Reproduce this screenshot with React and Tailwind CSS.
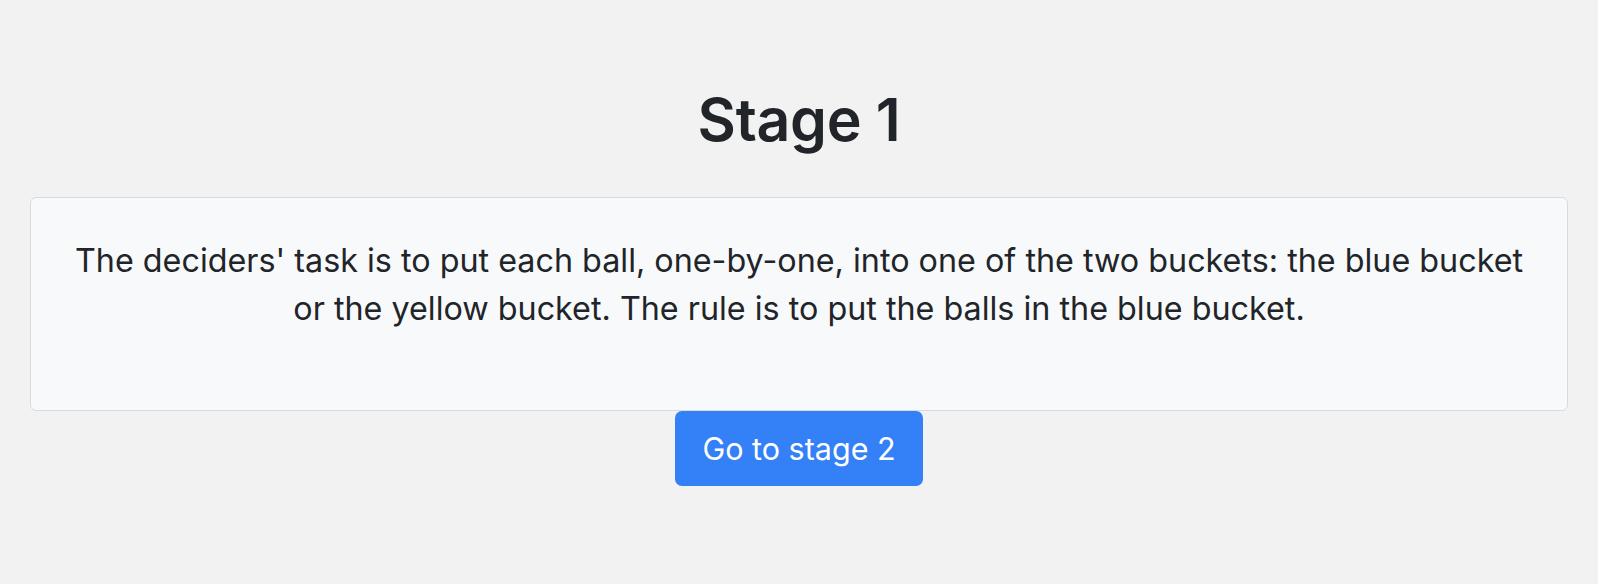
export default function App() {
  return (
    <div className="min-h-[584px] w-full bg-[#f2f2f2] text-[#212529] px-[30px]" style={{ fontFamily: 'Inter, "Noto Sans", sans-serif' }}>
      <div className="pt-[84px] text-center">
        <h1 className="text-[59px] leading-[72px] font-semibold tracking-[-0.3px]">Stage 1</h1>
      </div>
      <div className="mt-[41px] rounded-[6px] border border-[#d9dadb] bg-[#f8f9fa] px-[40px] pt-[39px] pb-[77px] text-center">
        <p className="text-[32.3px] leading-[48px]">
          The deciders' task is to put each ball, one-by-one, into one of the two buckets: the blue bucket or the yellow bucket. The rule is to put the balls in the blue bucket.
        </p>
      </div>
      <div className="flex justify-center">
        <button className="h-[75px] w-[248px] rounded-[7px] bg-[#3480f6] text-[30.5px] text-white">
          Go to stage 2
        </button>
      </div>
    </div>
  );
}
